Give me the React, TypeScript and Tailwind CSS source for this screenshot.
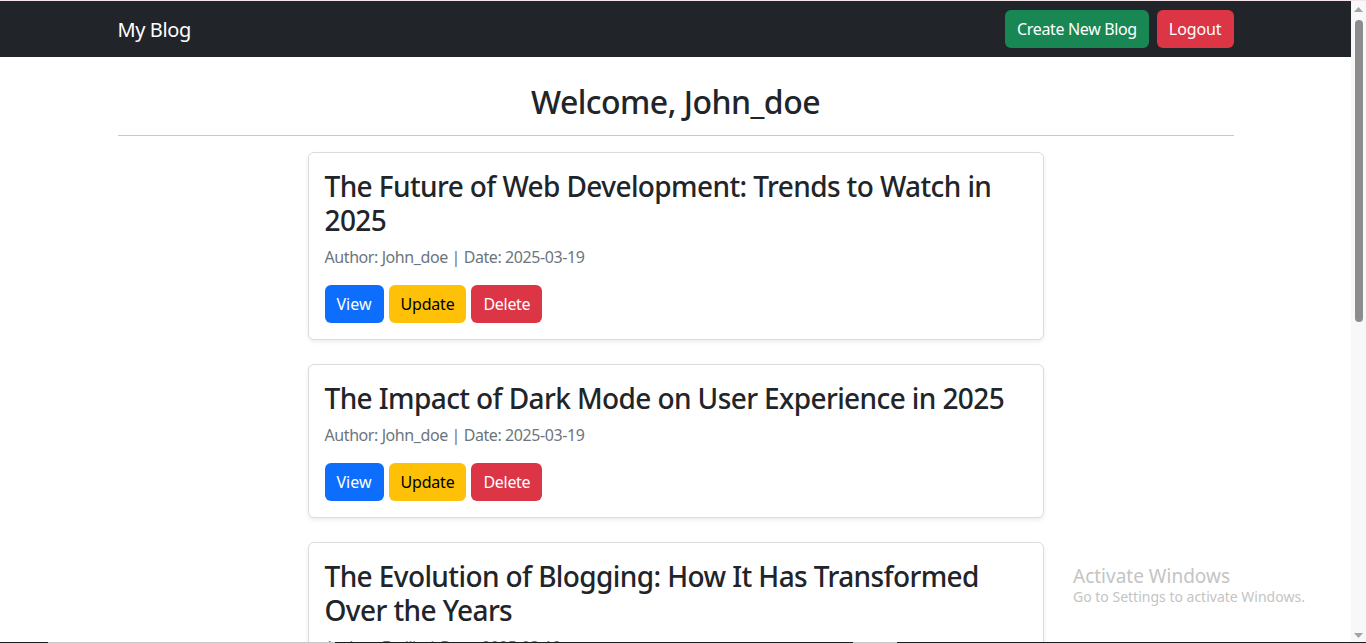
const blogs = [
  {
    title: 'The Future of Web Development: Trends to Watch in 2025',
    author: 'John_doe',
    date: '2025-03-19',
  },
  {
    title: 'The Impact of Dark Mode on User Experience in 2025',
    author: 'John_doe',
    date: '2025-03-19',
  },
  {
    title: 'The Evolution of Blogging: How It Has Transformed Over the Years',
    author: 'Emilia',
    date: '2025-03-19',
  },
];

function Scrollbar() {
  return (
    <div className="w-[15px] shrink-0 bg-[#f8f8f8] flex flex-col items-center">
      <svg width="9" height="6" viewBox="0 0 9 6" className="mt-[6px]">
        <polygon points="4.5,0 9,5 0,5" fill="#a3a3a3" />
      </svg>
      <div className="mt-[7px] w-[8px] h-[302px] rounded-full bg-[#8c8c8c]" />
      <div className="flex-1" />
      <svg width="9" height="6" viewBox="0 0 9 6" className="mb-[3px]">
        <polygon points="0,0 9,0 4.5,5" fill="#a3a3a3" />
      </svg>
    </div>
  );
}

function BlogCard({ blog }: { blog: (typeof blogs)[number] }) {
  return (
    <div className="w-[736px] shrink-0 rounded-[6px] border border-[#dcdcdc] bg-white p-4 shadow-[0_2px_4px_rgba(0,0,0,0.075)]">
      <h3 className="mb-2 text-[28px] font-medium leading-[34px] tracking-[-0.6px] text-[#212529]">
        {blog.title}
      </h3>
      <p className="mb-4 text-base leading-6 tracking-[-0.42px] text-[#6c757d]">
        Author: {blog.author} | Date: {blog.date}
      </p>
      <div className="flex gap-[5px]">
        <button className="h-[38px] rounded-[6px] bg-[#0d6efd] px-3 text-base text-white">View</button>
        <button className="h-[38px] rounded-[6px] bg-[#ffc107] px-3 text-base tracking-[-0.2px] text-black">
          Update
        </button>
        <button className="h-[38px] rounded-[6px] bg-[#dc3545] px-3 text-base tracking-[-0.3px] text-white">
          Delete
        </button>
      </div>
    </div>
  );
}

export default function App() {
  return (
    <div
      className="relative flex h-[643px] w-full flex-col overflow-hidden bg-white"
      style={{ fontFamily: '"Noto Sans", "Open Sans", sans-serif' }}
    >
      <div className="h-px shrink-0 bg-[#f5e4e8]" />
      <div className="flex min-h-0 flex-1">
        <div className="min-w-0 flex-1 overflow-hidden">
          <nav className="h-[56px] bg-[#212529]">
            <div className="mx-auto flex h-full max-w-[1140px] items-center justify-between px-3">
              <span className="pt-px text-[20px] leading-[30px] tracking-[-0.4px] text-white">My Blog</span>
              <div className="flex gap-2">
                <button className="h-[38px] rounded-[6px] bg-[#198754] px-3 text-base tracking-[-0.35px] text-white">
                  Create New Blog
                </button>
                <button className="h-[38px] rounded-[6px] bg-[#dc3545] px-3 text-base tracking-[-0.1px] text-white">
                  Logout
                </button>
              </div>
            </div>
          </nav>

          <main className="mx-auto max-w-[1140px] px-3 pt-6">
            <h2 className="mb-2 pt-[2px] text-center text-[32px] font-medium leading-[38px] tracking-[-0.53px] text-[#212529]">
              Welcome, John_doe
            </h2>
            <hr className="mt-[14px] mb-4 border-t border-[#c8c9ca]" />
            <div className="flex flex-col items-center gap-6">
              {blogs.map((blog) => (
                <BlogCard key={blog.title} blog={blog} />
              ))}
            </div>
          </main>
        </div>
        <Scrollbar />
      </div>
      <div className="flex h-px shrink-0">
        <div className="w-[48px] bg-[#1c1c1c]" />
        <div className="w-[287px] bg-[#c8c8c8]" />
        <div className="w-[518px] bg-[#1c1c1c]" />
        <div className="w-[44px] bg-[#c8c8c8]" />
        <div className="flex-1 bg-[#1c1c1c]" />
      </div>

      <div className="absolute left-[1073px] top-[564px] text-[#c4c4c4]">
        <div className="text-[19px] leading-[24px]">Activate Windows</div>
        <div className="text-[14px] leading-[18px]">Go to Settings to activate Windows.</div>
      </div>
    </div>
  );
}
